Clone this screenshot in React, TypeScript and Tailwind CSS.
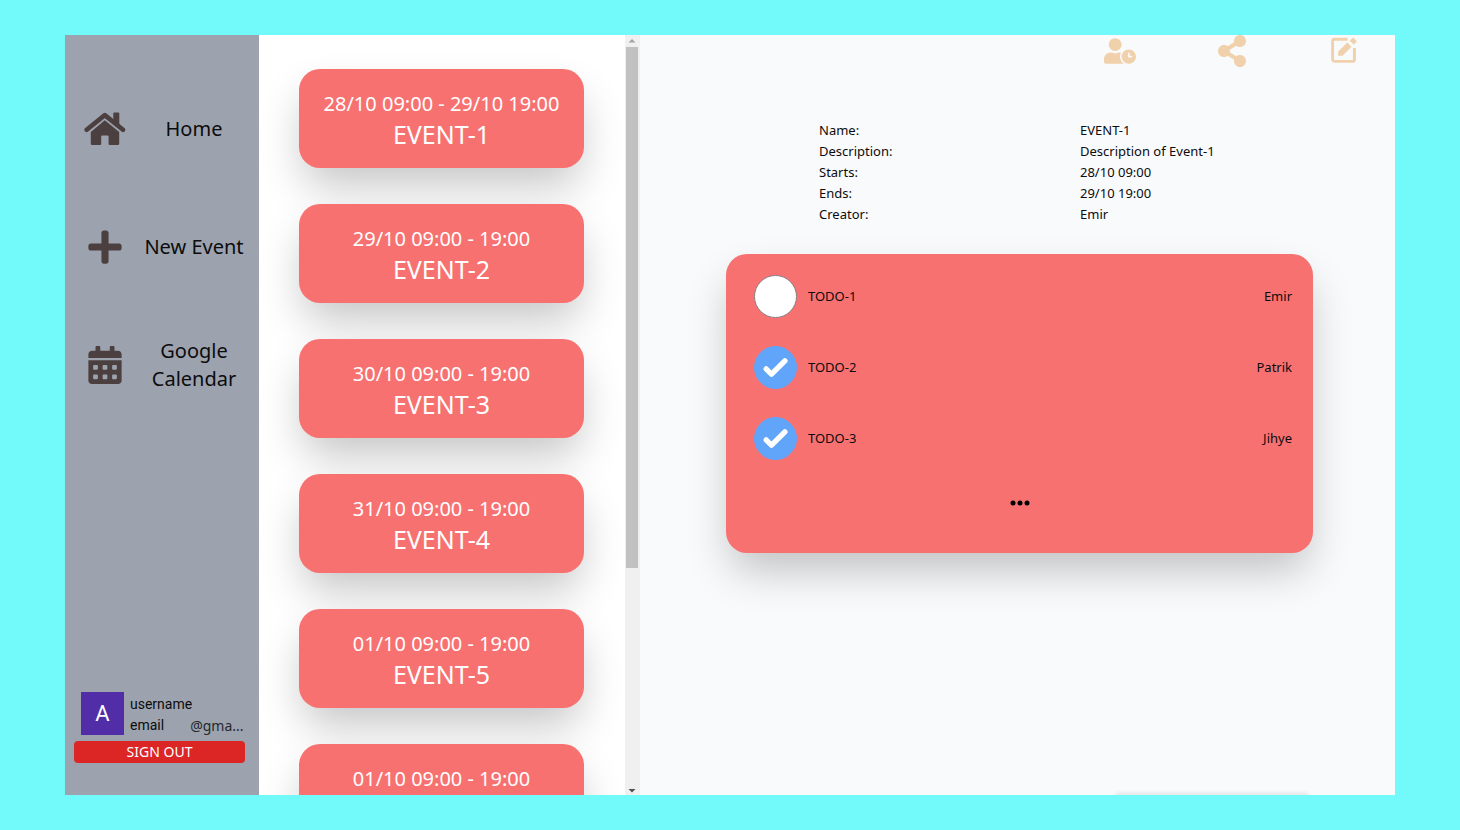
import { useState } from "react";
import { FaCalendarAlt, FaPlus, FaShareAlt, FaUserClock } from "react-icons/fa";

type IconProps = { className?: string };

function HomeIcon({ className }: IconProps) {
  return (
    <svg viewBox="0 0 42 34" className={className} aria-hidden="true">
      <path d="M2.700 17.700 20.800 3.100 39 17.700" fill="none" stroke="currentColor" strokeWidth="4.600" strokeLinecap="round" strokeLinejoin="round" />
      <path d="M29.300 9V1.500a1 1 0 0 1 1-1h4a1 1 0 0 1 1 1V14z" fill="currentColor" />
      <path d="M20.800 8.300 35.200 20V31.700a1.400 1.400 0 0 1-1.400 1.400H25.600a1 1 0 0 1-1-1V24.600a1 1 0 0 0-1-1H18.200a1 1 0 0 0-1 1V32.100a1 1 0 0 1-1 1H8.200a1.400 1.400 0 0 1-1.400-1.400V20z" fill="currentColor" />
    </svg>
  );
}

function EditIcon({ className }: IconProps) {
  return (
    <svg viewBox="-3 -2 32 32" className={className} aria-hidden="true">
      <path d="M16.500 2.300H3.600A2 2 0 0 0 1.600 4.300V22.400a2 2 0 0 0 2 2H21.400a2 2 0 0 0 2-2V11" fill="none" stroke="currentColor" strokeWidth="2.900" />
      <path d="M7.200 18.800V14.600L16.300 5.500 20.600 9.800 11.500 18.800z" fill="currentColor" />
      <path d="M18.800 3.700 21.300 1.100a1 1 0 0 1 1.400 0L25.400 3.700a1 1 0 0 1 0 1.400L22.900 7.700z" fill="currentColor" />
    </svg>
  );
}

const links = [
  { label: "Home", Icon: HomeIcon, iconSize: "w-[42px] h-[34px]" },
  { label: "New Event", Icon: FaPlus, iconSize: "size-[38px]" },
  { label: "Google Calendar", Icon: FaCalendarAlt, iconSize: "size-[38px]" },
];

const events = [
  { time: "28/10 09:00 - 29/10 19:00", name: "EVENT-1" },
  { time: "29/10 09:00 - 19:00", name: "EVENT-2" },
  { time: "30/10 09:00 - 19:00", name: "EVENT-3" },
  { time: "31/10 09:00 - 19:00", name: "EVENT-4" },
  { time: "01/10 09:00 - 19:00", name: "EVENT-5" },
  { time: "01/10 09:00 - 19:00", name: "EVENT-6" },
];

const details = [
  ["Name:", "EVENT-1"],
  ["Description:", "Description of Event-1"],
  ["Starts:", "28/10 09:00"],
  ["Ends:", "29/10 19:00"],
  ["Creator:", "Emir"],
];

const initialTodos = [
  { id: "todo-1", label: "TODO-1", owner: "Emir", done: false },
  { id: "todo-2", label: "TODO-2", owner: "Patrik", done: true },
  { id: "todo-3", label: "TODO-3", owner: "Jihye", done: true },
];

const actions = [
  { label: "Invite", Icon: FaUserClock },
  { label: "Share", Icon: FaShareAlt },
  { label: "Edit", Icon: EditIcon },
];

function Sidebar() {
  return (
    <aside className="flex flex-col bg-[#9ca3af]">
      <nav className="flex flex-col pt-[35px]">
        {links.map(({ label, Icon, iconSize }) => (
          <a key={label} href="#" className="flex h-[118px] items-center pl-[18px]">
            <span className="flex w-11 shrink-0 justify-center text-[#4b403f]">
              <Icon className={iconSize} />
            </span>
            <span className="flex-1 pr-2.5 pl-3 text-center text-xl leading-7">{label}</span>
          </a>
        ))}
      </nav>
      <div className="mt-auto px-[9px] pb-8">
        <div className="flex h-12 items-center gap-1.5 pl-[7px]">
          <div className="flex size-[43px] shrink-0 items-center justify-center bg-[#512da8] font-[Roboto,sans-serif] text-[22px] text-white">
            A
          </div>
          <div className="flex-1 pt-1 text-sm leading-[21px]">
            <p className="font-[Roboto,sans-serif]">username</p>
            <p className="flex gap-[26px]">
              <span className="font-[Roboto,sans-serif]">email</span>
              <span className="text-[#26282b]">@gma...</span>
            </p>
          </div>
        </div>
        <button className="mt-1 block h-[22px] w-[171px] rounded bg-[#dc2626] text-sm leading-[22px] text-white">
          SIGN OUT
        </button>
      </div>
    </aside>
  );
}

function EventList() {
  return (
    <section className="flex min-h-0 bg-white">
      <div className="flex flex-1 flex-col gap-9 overflow-y-auto pt-[34px] pr-[41px] pb-9 pl-10 [scrollbar-width:none]">
        {events.map(({ time, name }) => (
          <button
            key={name}
            className="flex h-[99px] shrink-0 flex-col items-center justify-center rounded-[21px] bg-[#f87171] pt-0.5 text-white shadow-[0_22px_44px_-5px_rgba(0,0,0,0.23)]"
          >
            <span className="text-xl leading-7">{time}</span>
            <span className="text-[25px] leading-8">{name}</span>
          </button>
        ))}
      </div>
      <div aria-hidden="true" className="flex w-[15px] flex-col items-center bg-[#f0f0f0] pr-px">
        <svg viewBox="0 0 14 12" className="h-3 w-3.5">
          <path d="M3.500 7.500 7 4 10.500 7.500z" fill="#a3a3a3" />
        </svg>
        <div className="h-[521px] w-3 bg-[#c1c1c1]" />
        <svg viewBox="0 0 14 12" className="mt-auto h-3 w-3.5">
          <path d="M3.500 6 7 9.500 10.500 6z" fill="#505050" />
        </svg>
      </div>
    </section>
  );
}

function TodoCard() {
  const [todos, setTodos] = useState(initialTodos);
  const toggle = (id: string) =>
    setTodos((list) => list.map((t) => (t.id === id ? { ...t, done: !t.done } : t)));

  return (
    <div className="mt-[29px] mr-[82px] ml-[86px] flex h-[299px] shrink-0 flex-col rounded-[21px] bg-[#f87171] shadow-[0_22px_44px_-5px_rgba(0,0,0,0.23)]">
      <ul className="flex flex-col gap-7 pt-[21px] pr-[21px] pl-7">
        {todos.map(({ id, label, owner, done }) => (
          <li key={id} className="flex h-[43px] items-center text-[13px]">
            <span className="grid size-[43px] place-items-center">
              <input
                id={id}
                type="checkbox"
                checked={done}
                onChange={() => toggle(id)}
                className="col-start-1 row-start-1 size-[43px] appearance-none rounded-full border border-[#8a7f86] bg-white checked:border-[#60a5fa] checked:bg-[#60a5fa]"
              />
              {done && (
                <svg viewBox="0 0 16 16" className="pointer-events-none col-start-1 row-start-1 size-[43px]" aria-hidden="true">
                  <path d="M12.207 4.793a1 1 0 0 1 0 1.414l-5 5a1 1 0 0 1-1.414 0l-2-2a1 1 0 0 1 1.414-1.414L6.500 9.086l4.293-4.293a1 1 0 0 1 1.414 0z" fill="white" />
                </svg>
              )}
            </span>
            <label htmlFor={id} className="ml-[11px] flex-1">
              {label}
            </label>
            <span>{owner}</span>
          </li>
        ))}
      </ul>
      <button aria-label="Show more" className="mt-[33px] flex h-5 items-center justify-center">
        <svg viewBox="0 0 20 6" className="h-[6px] w-5">
          <circle cx="3" cy="3" r="2.500" />
          <circle cx="10" cy="3" r="2.500" />
          <circle cx="17" cy="3" r="2.500" />
        </svg>
      </button>
    </div>
  );
}

export default function App() {
  return (
    <div className="h-screen bg-[#72fafa] px-[65px] py-[35px] font-['Noto_Sans',sans-serif] text-[#0c0c0d]">
      <div className="grid h-full grid-cols-[194px_381px_1fr] grid-rows-[minmax(0,1fr)] overflow-hidden">
        <Sidebar />
        <EventList />
        <main className="flex min-h-0 flex-col overflow-hidden bg-[#f9fafc]">
          <div className="flex h-8 shrink-0 justify-end gap-20 pr-[35px]">
            {actions.map(({ label, Icon }) => (
              <button key={label} aria-label={label} className="text-[#f0d1ab]">
                <Icon className="size-8" />
              </button>
            ))}
          </div>
          <dl className="mt-[53px] pl-[179px] text-[13px] leading-[21px]">
            {details.map(([term, value]) => (
              <div key={term} className="flex">
                <dt className="w-[261px]">{term}</dt>
                <dd>{value}</dd>
              </div>
            ))}
          </dl>
          <TodoCard />
          <div className="mt-auto mr-[88px] h-0 w-[190px] shrink-0 self-end shadow-[0_0_4px_1px_rgba(0,0,0,0.2)]" />
        </main>
      </div>
    </div>
  );
}
